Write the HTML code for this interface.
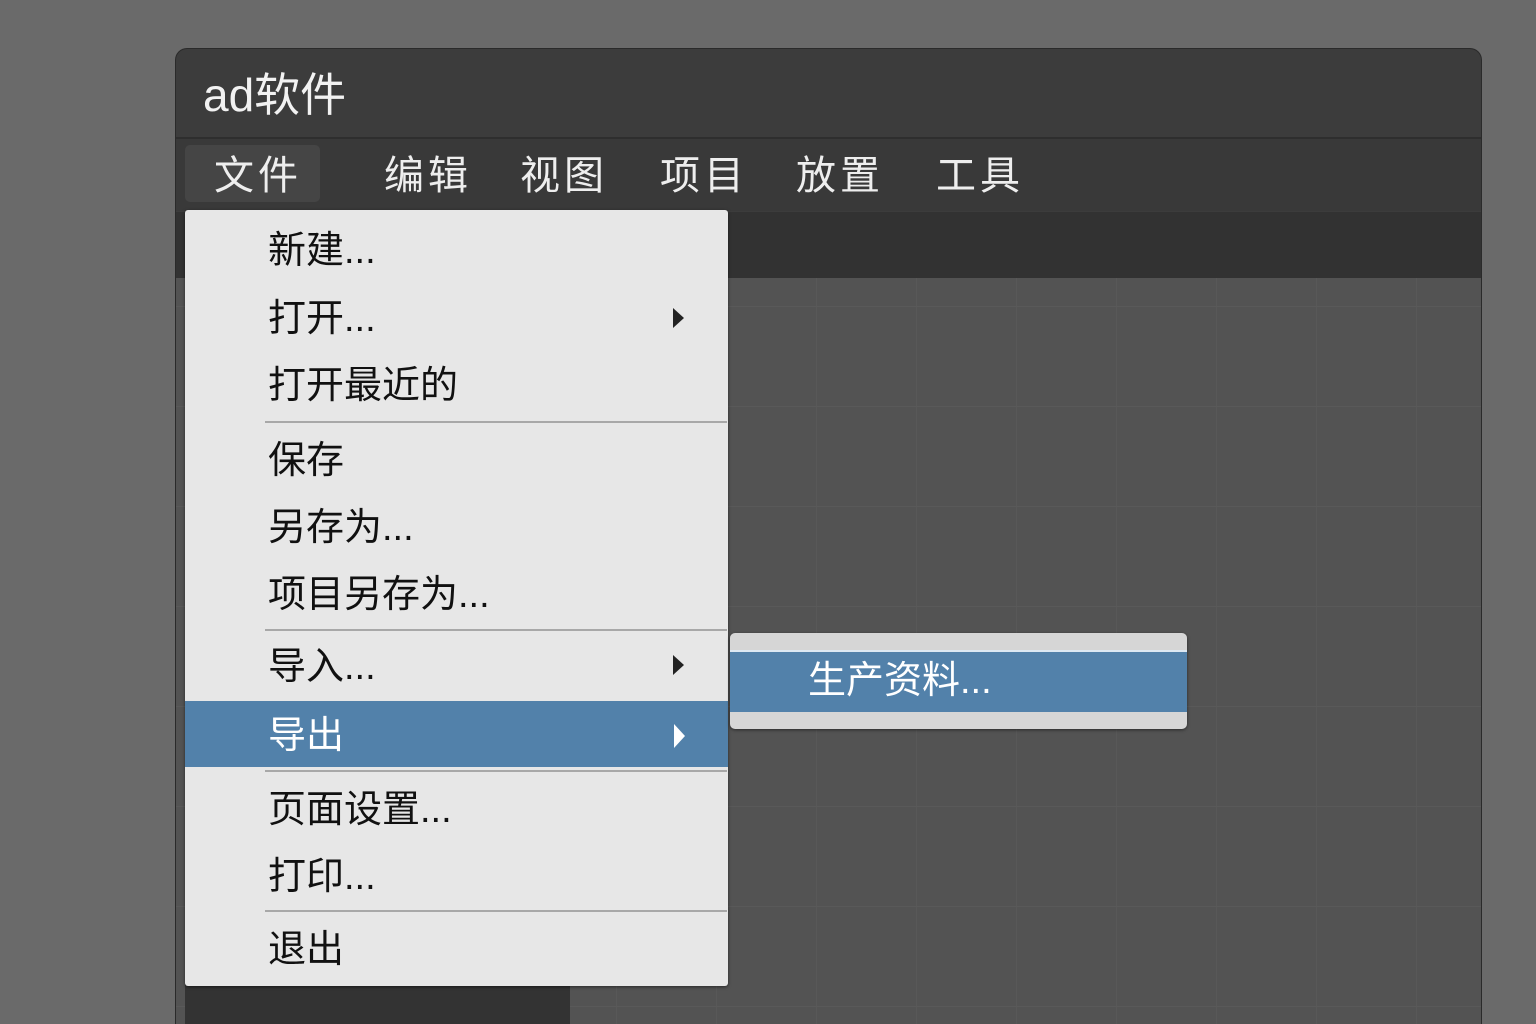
<!DOCTYPE html>
<html style="overflow:hidden;height:1024px"><head><meta charset="utf-8"><style>
*{margin:0;padding:0;box-sizing:border-box}
body{width:1536px;height:1024px;background:#6a6a6a;position:relative;overflow:hidden;font-family:"Liberation Sans","Noto Sans CJK SC",sans-serif}
.a{position:absolute}
.win{left:175px;top:48px;width:1307px;height:976px;background:#3c3c3c;border-radius:12px 12px 0 0;border:1px solid #2a2a2a;border-bottom:none}
.t{white-space:nowrap;line-height:1}
.mi{position:absolute;left:268px;font-size:38px;color:#111;line-height:1;white-space:nowrap}
.sep{position:absolute;left:265px;width:462px;height:2px;background:#a8a8a8}
.arr{position:absolute;width:0;height:0;border-top:10px solid transparent;border-bottom:10px solid transparent;border-left:11px solid #222}
.mb{position:absolute;top:156px;font-size:40px;color:#eee;line-height:1;letter-spacing:4px}
</style></head><body>
<div class="a win"></div>
<div class="a" style="left:176px;top:137px;width:1305px;height:2px;background:#2e2e2e"></div>
<div class="a" style="left:176px;top:139px;width:1305px;height:72px;background:#393939"></div>
<div class="a" style="left:176px;top:212px;width:1305px;height:66px;background:#323232"></div>
<div class="a" style="left:176px;top:278px;width:1305px;height:746px;background:#535353;
background-image:linear-gradient(#595959 1px,transparent 1px),linear-gradient(90deg,#585858 1px,transparent 1px);background-size:100px 100px,100px 100px;background-position:0 28px,40px 0"></div>
<div class="a" style="left:185px;top:900px;width:385px;height:124px;background:#333"></div>
<div class="a t" style="left:203px;top:72px;font-size:46px;color:#f2f2f2">ad软件</div>
<div class="a" style="left:185px;top:145px;width:135px;height:57px;background:#454545;border-radius:5px"></div>
<div class="mb" style="left:214px">文件</div>
<div class="mb" style="left:384px">编辑</div>
<div class="mb" style="left:520px">视图</div>
<div class="mb" style="left:660px">项目</div>
<div class="mb" style="left:796px">放置</div>
<div class="mb" style="left:936px">工具</div>

<div class="a" style="left:185px;top:210px;width:543px;height:776px;background:#e7e7e7;border-radius:3px;box-shadow:0 1px 3px rgba(0,0,0,.5)"></div>
<div class="mi" style="top:232px">新建...</div>
<div class="mi" style="top:300px">打开...</div><div class="arr" style="left:673px;top:308px"></div>
<div class="mi" style="top:367px">打开最近的</div>
<div class="sep" style="top:421px"></div>
<div class="mi" style="top:442px">保存</div>
<div class="mi" style="top:509px">另存为...</div>
<div class="mi" style="top:576px">项目另存为...</div>
<div class="sep" style="top:629px"></div>
<div class="mi" style="top:648px">导入...</div><div class="arr" style="left:673px;top:655px"></div>
<div class="a" style="left:185px;top:701px;width:543px;height:66px;background:#5281aa"></div>
<div class="mi" style="top:717px;color:#fff">导出</div><div class="arr" style="left:674px;top:724px;border-left-color:#fff;border-top-width:12px;border-bottom-width:12px"></div>
<div class="sep" style="top:770px"></div>
<div class="mi" style="top:791px">页面设置...</div>
<div class="mi" style="top:858px">打印...</div>
<div class="sep" style="top:910px"></div>
<div class="mi" style="top:931px">退出</div>

<div class="a" style="left:730px;top:633px;width:457px;height:96px;background:#d6d6d6;border-radius:5px;box-shadow:0 1px 3px rgba(0,0,0,.5)"></div>
<div class="a" style="left:730px;top:650px;width:457px;height:62px;background:#5281aa;border-top:2px solid #dde8f2"></div>
<div class="mi" style="left:808px;top:662px;color:#fff">生产资料...</div>
</body></html>
